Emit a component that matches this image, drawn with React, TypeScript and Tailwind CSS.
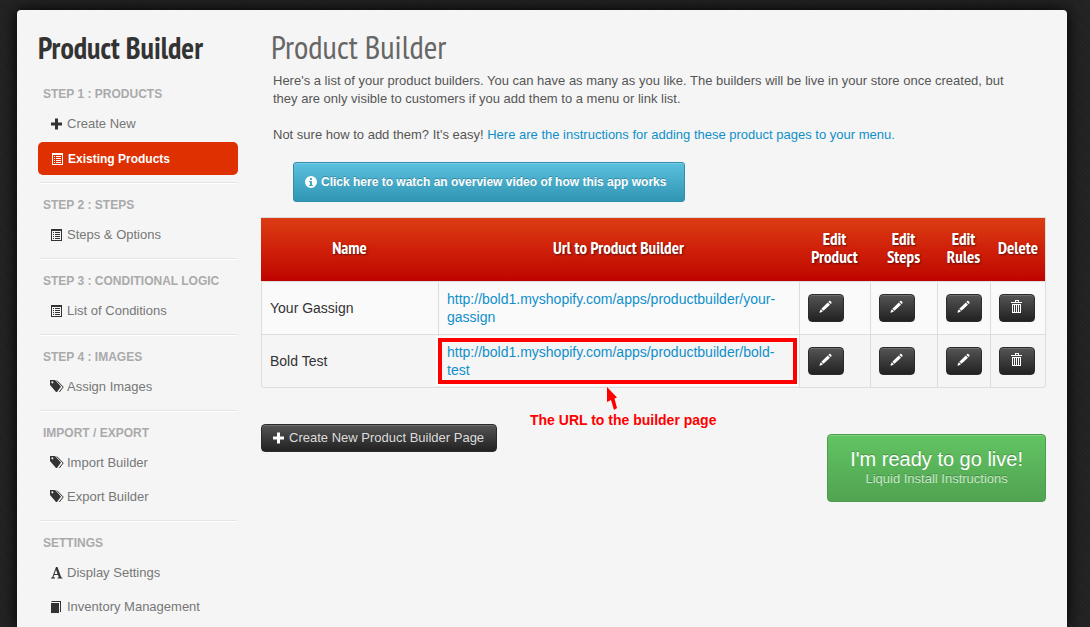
import React from "react";

const builders = [
  { id: 1, name: "Your Gassign", slug: "your-gassign", marked: false },
  { id: 2, name: "Bold Test", slug: "bold-test", marked: true },
];

const sections = [
  {
    title: "STEP 1 : PRODUCTS",
    items: [
      { label: "Create New", icon: "plus" },
      { label: "Existing Products", icon: "list", active: true },
    ],
  },
  { title: "STEP 2 : STEPS", items: [{ label: "Steps & Options", icon: "list" }] },
  {
    title: "STEP 3 : CONDITIONAL LOGIC",
    items: [{ label: "List of Conditions", icon: "list" }],
  },
  { title: "STEP 4 : IMAGES", items: [{ label: "Assign Images", icon: "tags" }] },
  {
    title: "IMPORT / EXPORT",
    items: [
      { label: "Import Builder", icon: "tags" },
      { label: "Export Builder", icon: "tags" },
    ],
  },
  {
    title: "SETTINGS",
    items: [
      { label: "Display Settings", icon: "font" },
      { label: "Inventory Management", icon: "book" },
    ],
  },
];

function Icon({ name }: { name: string }) {
  return (
    <svg width="14" height="14" viewBox="0 0 14 14" fill="currentColor" className="shrink-0" aria-hidden="true">
      {name === "plus" && <path d="M5 1.5h3v4h4v3H8v4H5v-4H1v-3h4z" />}
      {name === "list" && (
        <path
          fillRule="evenodd"
          d="M1 1h11v12H1zM2 3v9h9V3zM3 4h1v1H3zM5 4h5v1H5zM3 6h1v1H3zM5 6h5v1H5zM3 8h1v1H3zM5 8h5v1H5zM3 10h1v1H3zM5 10h5v1H5z"
        />
      )}
      {name === "tags" && (
        <>
          <path fillRule="evenodd" d="M0 0h5l6 6.500-4 5.500H6L0 5zM2.300 1.200a1 1 0 1 0 .1 0z" />
          <path d="M6.800.5 13.200 7 9.300 12" fill="none" stroke="currentColor" strokeWidth="1" />
        </>
      )}
      {name === "font" && (
        <path
          fillRule="evenodd"
          d="M6 1h1.500l3.700 10.300 1.300.4v.8H7.500v-.8l1.300-.4-.8-2.300H4.200l-.7 2.100 1.500.6v.8H1v-.8l1.300-.5zM6 3.800 4.600 8h3z"
        />
      )}
      {name === "book" && (
        <>
          <path d="M1 3h8v10H1z" />
          <path d="M2 1h9v11h-1V2H1z" />
        </>
      )}
      {name === "info" && (
        <path
          fillRule="evenodd"
          d="M7 1a6 6 0 1 1 0 12A6 6 0 0 1 7 1zM6 3v2h2V3zM5 6v1h1v3H5v1h4v-1H8V6z"
        />
      )}
      {name === "pencil" && (
        <path d="M10.200 1c.8-.8 3 1.200 2.300 2.200l-.8.9-2.300-2.200zM8.800 2.500l2.200 2.200-6.500 6.100-2.200-2.100zM1.800 9.300l2.200 2-2.800 1.400c-.4.100-.8-.3-.7-.7z" />
      )}
      {name === "trash" && (
        <path
          fillRule="evenodd"
          d="M5 0h4v2h3v1H1V2h4zM6 1v1h2V1zM2 4h9v9H2zM3 5v7h1V5zM5 5v7h1V5zM7 5v7h1V5zM9 5v7h1V5z"
        />
      )}
    </svg>
  );
}

function Sidebar() {
  return (
    <aside className="w-[200px] shrink-0">
      <h2 className="h-[70px] pt-5 font-['PT_Sans_Narrow','Open_Sans_Condensed','Roboto_Condensed',Lato,sans-serif] text-3xl leading-9 font-bold whitespace-nowrap text-[#333]">
        Product Builder
      </h2>
      <nav>
        {sections.map((section, index) => (
          <section key={section.title}>
            {index > 0 && (
              <hr className="mx-px my-[7px] h-[2px] border-t border-b border-t-[#e4e4e4] border-b-white" />
            )}
            <h3 className="h-[26px] pl-[5px] text-xs leading-7 font-bold text-[#aaa]">{section.title}</h3>
            <ul>
              {section.items.map((item) => (
                <li key={item.label}>
                  {"active" in item && item.active ? (
                    <a
                      href="#"
                      className="my-[2px] flex h-[33px] items-center gap-[3px] rounded-[5px] bg-[#de3000] pl-[13px] text-xs font-bold text-white"
                    >
                      <Icon name={item.icon} />
                      {item.label}
                    </a>
                  ) : (
                    <a href="#" className="flex h-[34px] items-center gap-[3px] pt-[2px] pl-3 text-[13px] text-[#777]">
                      <span className="text-[#333]">
                        <Icon name={item.icon} />
                      </span>
                      {item.label}
                    </a>
                  )}
                </li>
              ))}
            </ul>
          </section>
        ))}
      </nav>
    </aside>
  );
}

function DarkButton({ icon, label }: { icon: string; label: string }) {
  return (
    <button
      type="button"
      aria-label={label}
      className="flex h-7 w-9 items-center justify-center rounded-[4px] border border-[#2b2b2b] bg-linear-to-b from-[#555] to-[#222] pb-[2px] text-white shadow-[inset_0_1px_0_rgba(255,255,255,0.15)]"
    >
      <Icon name={icon} />
    </button>
  );
}

function Note() {
  return (
    <>
      <span className="pointer-events-none absolute top-[3px] right-[2px] bottom-[3px] -left-px border-4 border-[#fe0000] shadow-[0_0_0_2px_#fcfcfc]" />
      <span className="absolute top-full left-[91px] text-sm leading-[18px] font-bold whitespace-nowrap text-[#fe0000]">
        <svg width="12" height="24" viewBox="0 0 12 24" fill="currentColor" className="ml-19" aria-hidden="true">
          <path d="M1 0 11 10.500 8.500 11.500 11 21 8 23 5 13 1 15z" />
        </svg>
        The URL to the builder page
      </span>
    </>
  );
}

function BuilderTable() {
  const th = "px-2 pb-1";
  const td = "h-[53px] border-t border-l border-[#ddd] px-2 align-middle";
  return (
    <table className="w-full table-fixed border-separate border-spacing-0 rounded-b-[4px] border-t border-r border-b border-[#ddd]">
      <colgroup>
        <col className="w-[177px]" />
        <col />
        <col className="w-[71px]" />
        <col className="w-[67px]" />
        <col className="w-[53px]" />
        <col className="w-[55px]" />
      </colgroup>
      <thead className="bg-linear-to-b from-[#db3c13] via-[#cf1f09] to-[#be0200]">
        <tr className="h-[63px] font-['PT_Sans_Narrow','Open_Sans_Condensed','Roboto_Condensed',Lato,sans-serif] text-[17px] leading-[18px] text-white [text-shadow:1px_1px_2px_rgba(0,0,0,0.5)]">
          <th scope="col" className={th}>Name</th>
          <th scope="col" className={th}>Url to Product Builder</th>
          <th scope="col" className={th}>Edit Product</th>
          <th scope="col" className={th}>Edit Steps</th>
          <th scope="col" className={th}>Edit Rules</th>
          <th scope="col" className={th}>Delete</th>
        </tr>
      </thead>
      <tbody className="text-sm leading-[18px] text-[#333]">
        {builders.map((row) => (
          <tr key={row.id} className="odd:bg-[#fafafa]">
            <td className={td}>{row.name}</td>
            <td className={`${td} relative`}>
              <a href="#" className="text-[#0f8fca]">
                {`http://bold1.myshopify.com/apps/productbuilder/${row.slug}`}
              </a>
              {row.marked && <Note />}
            </td>
            <td className={td}>
              <DarkButton icon="pencil" label={`Edit product ${row.name}`} />
            </td>
            <td className={td}>
              <DarkButton icon="pencil" label={`Edit steps ${row.name}`} />
            </td>
            <td className={td}>
              <DarkButton icon="pencil" label={`Edit rules ${row.name}`} />
            </td>
            <td className={td}>
              <DarkButton icon="trash" label={`Delete ${row.name}`} />
            </td>
          </tr>
        ))}
      </tbody>
    </table>
  );
}

function App() {
  return (
    <div className="flex min-h-screen bg-[#222] bg-[repeating-linear-gradient(45deg,transparent_0_2px,rgba(255,255,255,0.02)_2px_3px)] pt-[10px] pr-[23px] pl-[17px] font-['Liberation_Sans',Arial,sans-serif]">
      <div className="flex flex-1 gap-[23px] rounded-t-[4px] bg-[#f5f5f5] pr-[21px] pl-[21px] shadow-[0_0_16px_#000]">
        <Sidebar />
        <main className="min-w-0 flex-1">
          <h1 className="pt-4 pb-1 pl-[10px] font-['PT_Sans_Narrow','Open_Sans_Condensed','Roboto_Condensed',Lato,sans-serif] text-[33px] leading-[42px] text-[#666]">
            Product Builder
          </h1>
          <p className="pr-4 pl-3 text-[13px] leading-[18px] text-[#555]">
            Here's a list of your product builders. You can have as many as you like. The builders will be live in your
            store once created, but they are only visible to customers if you add them to a menu or link list.
          </p>
          <p className="mt-[18px] pl-3 text-[13px] leading-[18px] text-[#555]">
            Not sure how to add them? It's easy!{" "}
            <a href="#" className="text-[#0f8fca]">
              Here are the instructions for adding these product pages to your menu.
            </a>
          </p>
          <button
            type="button"
            className="mt-[18px] mb-[15px] ml-8 flex h-10 items-center gap-[3px] rounded-[3px] border border-[#2f8fac] bg-linear-to-b from-[#5bc0de] to-[#2f96b4] pr-[18px] pl-[10px] text-xs font-bold text-white shadow-[inset_0_1px_0_rgba(255,255,255,0.2)] [text-shadow:0_-1px_0_rgba(0,0,0,0.25)]"
          >
            <Icon name="info" />
            Click here to watch an overview video of how this app works
          </button>
          <BuilderTable />
          <div className="flex items-start justify-between pt-9">
            <button
              type="button"
              className="flex h-7 items-center gap-[3px] rounded-[4px] border border-[#2b2b2b] bg-linear-to-b from-[#555] to-[#222] pr-3 pl-[10px] text-[13px] text-[#ddd] shadow-[inset_0_1px_0_rgba(255,255,255,0.15)]"
            >
              <span className="text-white">
                <Icon name="plus" />
              </span>
              Create New Product Builder Page
            </button>
            <button
              type="button"
              className="mt-[10px] flex h-[68px] flex-col items-center justify-center rounded-[4px] border border-[#4c9c4c] bg-linear-to-b from-[#62c462] to-[#51a351] px-[22px] text-xl leading-[22px] text-white shadow-[inset_0_1px_0_rgba(255,255,255,0.2)] [text-shadow:0_-1px_0_rgba(0,0,0,0.25)]"
            >
              I'm ready to go live!
              <small className="text-[13px] leading-[18px] text-[#c9e8c9]">Liquid Install Instructions</small>
            </button>
          </div>
        </main>
      </div>
    </div>
  );
}

export default App;
